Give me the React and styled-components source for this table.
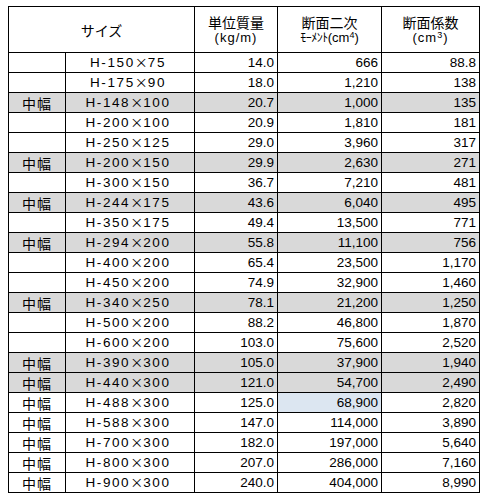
import React from 'react';
import styled, { createGlobalStyle } from 'styled-components';

const GlobalStyle = createGlobalStyle`
  body {
    margin: 0;
    background: #fff;
    font-family: "Liberation Sans", "Noto Sans CJK JP", sans-serif;
    color: #000;
  }
`;

const Page = styled.div`
  padding: 6px 0 0 8px;
`;

const Table = styled.table`
  border-collapse: collapse;
  table-layout: fixed;
  width: 472px;
`;

const HeadCell = styled.th`
  height: 45px;
  padding: 0;
  border: 1px solid #000;
  font-weight: normal;
  font-size: 14px;
  line-height: 16px;
  text-align: center;
  vertical-align: middle;
  font-family: "Noto Sans CJK JP", sans-serif;
`;

const Unit = styled.span`
  display: block;
  font-family: "Liberation Sans", "Noto Sans CJK JP", sans-serif;
  font-size: 13px;
  line-height: 16px;
  letter-spacing: ${(p) => (p.wide ? '1px' : '0')};
`;

const Kana = styled.span`
  font-family: "Noto Sans CJK JP", sans-serif;
  font-size: 12px;
  line-height: 1;
  letter-spacing: -0.5px;
`;

const Sup = styled.sup`
  font-size: 9px;
  line-height: 0;
  vertical-align: 4px;
`;

const Row = styled.tr`
  height: 20px;
  background: ${(p) => (p.shaded ? '#d9d9d9' : '#fff')};
`;

const Cell = styled.td`
  height: 19px;
  padding: 0 3px 0 0;
  border: 1px solid #000;
  font-size: 13.5px;
  line-height: 16px;
  text-align: right;
  vertical-align: middle;
  white-space: nowrap;
  overflow: hidden;
  background: ${(p) => (p.highlight ? '#dce6f1' : 'transparent')};
`;

const WidthCell = styled(Cell)`
  padding: 0;
  text-align: center;
  font-family: "Noto Sans CJK JP", sans-serif;
  font-size: 14px;
  letter-spacing: 1px;
`;

const SizeCell = styled(Cell)`
  padding: 0 4px 0 0;
  text-align: center;
  letter-spacing: 1.6px;
`;

const Times = styled.span`
  font-family: "Noto Sans CJK JP", sans-serif;
  font-size: 13px;
  line-height: 1;
  letter-spacing: 0;
`;

const rows = [
  [false, '150', '75', '14.0', '666', '88.8'],
  [false, '175', '90', '18.0', '1,210', '138'],
  [true, '148', '100', '20.7', '1,000', '135', true],
  [false, '200', '100', '20.9', '1,810', '181'],
  [false, '250', '125', '29.0', '3,960', '317'],
  [true, '200', '150', '29.9', '2,630', '271', true],
  [false, '300', '150', '36.7', '7,210', '481'],
  [true, '244', '175', '43.6', '6,040', '495', true],
  [false, '350', '175', '49.4', '13,500', '771'],
  [true, '294', '200', '55.8', '11,100', '756', true],
  [false, '400', '200', '65.4', '23,500', '1,170'],
  [false, '450', '200', '74.9', '32,900', '1,460'],
  [true, '340', '250', '78.1', '21,200', '1,250', true],
  [false, '500', '200', '88.2', '46,800', '1,870'],
  [false, '600', '200', '103.0', '75,600', '2,520'],
  [true, '390', '300', '105.0', '37,900', '1,940', true],
  [true, '440', '300', '121.0', '54,700', '2,490', true],
  [true, '488', '300', '125.0', '68,900', '2,820', false, true],
  [true, '588', '300', '147.0', '114,000', '3,890'],
  [true, '700', '300', '182.0', '197,000', '5,640'],
  [true, '800', '300', '207.0', '286,000', '7,160'],
  [true, '900', '300', '240.0', '404,000', '8,990'],
];

export default function App() {
  return (
    <Page>
      <GlobalStyle />
      <Table>
        <colgroup>
          <col style={{ width: 57 }} />
          <col style={{ width: 129 }} />
          <col style={{ width: 83 }} />
          <col style={{ width: 104 }} />
          <col style={{ width: 98 }} />
        </colgroup>
        <thead>
          <tr>
            <HeadCell colSpan={2}>サイズ</HeadCell>
            <HeadCell>
              単位質量
              <Unit wide>(kg/m)</Unit>
            </HeadCell>
            <HeadCell>
              断面二次
              <Unit>
                <Kana>ﾓｰﾒﾝﾄ</Kana>(cm<Sup>4</Sup>)
              </Unit>
            </HeadCell>
            <HeadCell>
              断面係数
              <Unit wide>
                (cm<Sup>3</Sup>)
              </Unit>
            </HeadCell>
          </tr>
        </thead>
        <tbody>
          {rows.map(([mid, h, b, mass, inertia, modulus, shaded, highlight]) => (
            <Row key={h + b} shaded={shaded}>
              <WidthCell>{mid ? '中幅' : ''}</WidthCell>
              <SizeCell>
                H-{h}
                <Times>×</Times>
                {b}
              </SizeCell>
              <Cell>{mass}</Cell>
              <Cell highlight={highlight}>{inertia}</Cell>
              <Cell>{modulus}</Cell>
            </Row>
          ))}
        </tbody>
      </Table>
    </Page>
  );
}
